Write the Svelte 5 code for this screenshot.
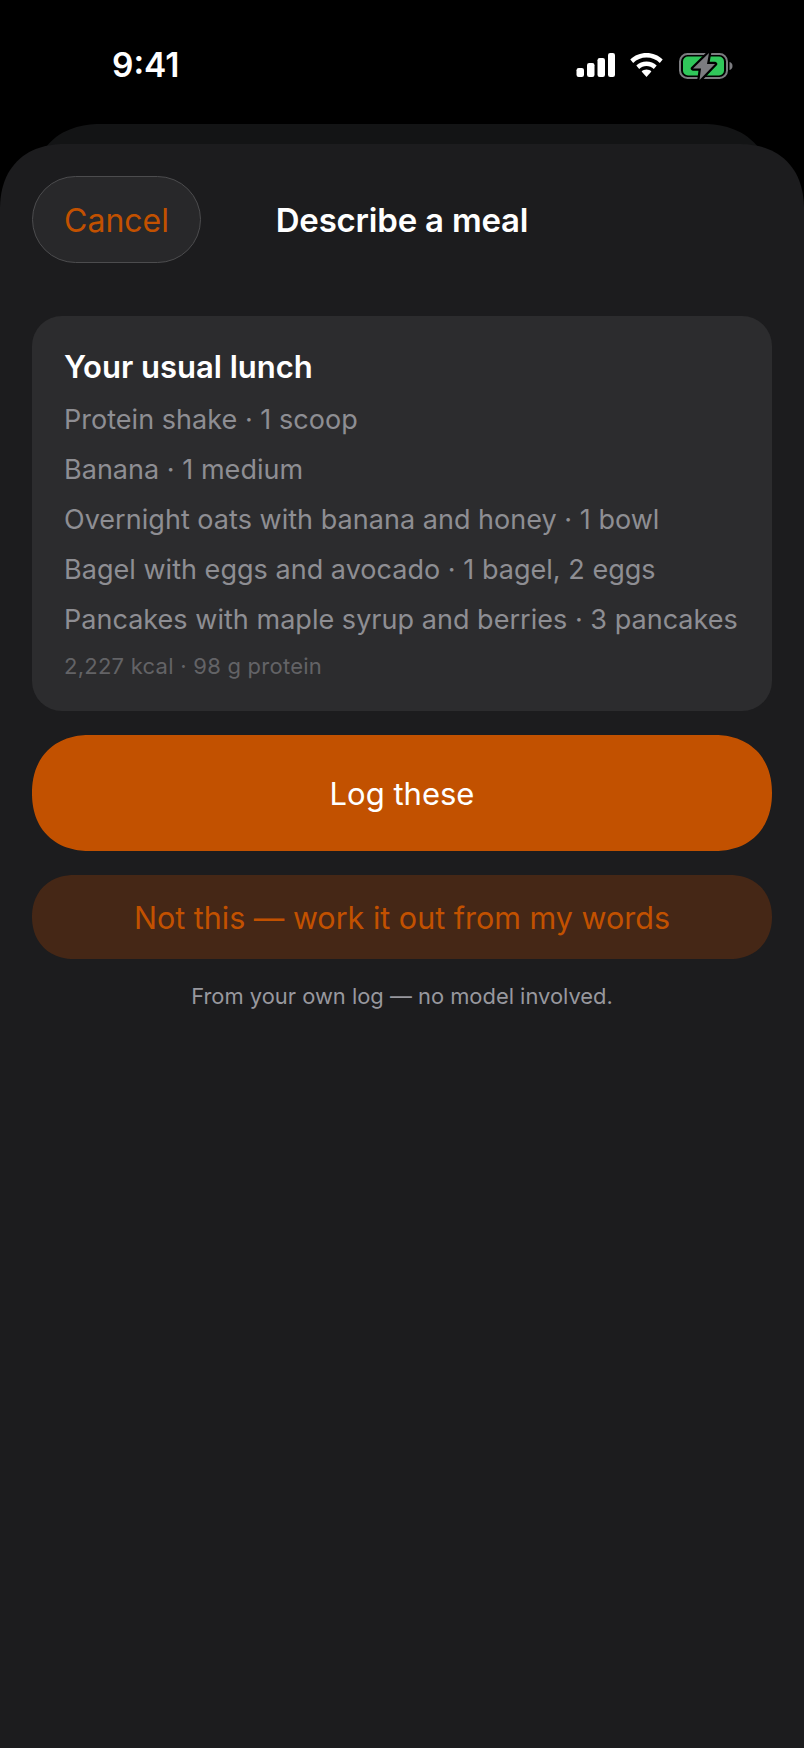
<script lang="ts">
  const items = [
    "Protein shake · 1 scoop",
    "Banana · 1 medium",
    "Overnight oats with banana and honey · 1 bowl",
    "Bagel with eggs and avocado · 1 bagel, 2 eggs",
    "Pancakes with maple syrup and berries · 3 pancakes",
  ];
</script>

<div class="page">
  <div class="status">
    <span class="time">9:41</span>
    <div class="icons">
      <svg class="signal" width="39" height="24" viewBox="0 0 39 24" fill="#fff">
        <rect x="0.5" y="15" width="7.5" height="9" rx="2.2" />
        <rect x="11" y="10" width="7.5" height="14" rx="2.2" />
        <rect x="21.5" y="5" width="7.5" height="19" rx="2.2" />
        <rect x="32" y="0" width="7" height="24" rx="2.2" />
      </svg>
      <svg class="wifi" width="33" height="24" viewBox="0 0 33 24" fill="#fff">
        <path d="M16.5 0C10.2 0 4.6 2.4 0.3 6.400L3.200 10C6.700 6.600 11.400 4.600 16.5 4.600s9.800 2 13.300 5.400l2.900-3.600C28.400 2.400 22.800 0 16.500 0z" />
        <path d="M16.500 8.600c-3.900 0-7.500 1.500-10.200 4l2.900 3.300c1.900-1.800 4.500-2.900 7.300-2.900s5.400 1.100 7.300 2.900l2.900-3.300c-2.700-2.500-6.300-4-10.200-4z" />
        <path d="M16.500 16.600c-1.900 0-3.600 .7-4.900 1.900L16.500 24l4.900-5.500c-1.300-1.200-3-1.900-4.900-1.900z" />
      </svg>
      <svg class="battery" width="55" height="29" viewBox="0 0 55 29">
        <rect x="1" y="2" width="47" height="24" rx="7.500" fill="none" stroke="#7c7c80" stroke-width="2" />
        <rect x="4" y="4.500" width="41" height="19" rx="5" fill="#30c75a" />
        <path d="M50.500 10c2 .5 3 2 3 4s-1 3.500-3 4z" fill="#7c7c80" />
        <path class="bolt" d="M30 1L14 16.500h8L20.500 28 36 12h-8z" />
      </svg>
    </div>
  </div>

  <div class="behind"></div>

  <div class="sheet">
    <header class="top">
      <button type="button" class="cancel">Cancel</button>
      <h1>Describe a meal</h1>
    </header>

    <section class="card">
      <h2>Your usual lunch</h2>
      {#each items as item}
        <p class="item">{item}</p>
      {/each}
      <p class="totals">2,227 kcal · 98 g protein</p>
    </section>

    <button type="button" class="primary">Log these</button>
    <button type="button" class="secondary">Not this — work it out from my words</button>
    <p class="note">From your own log — no model involved.</p>
  </div>
</div>

<style>
  :global(body) {
    margin: 0;
    background: #000;
  }

  .page {
    position: relative;
    width: 804px;
    height: 1748px;
    background: #000;
    overflow: hidden;
    font-family: Inter, "Liberation Sans", sans-serif;
    display: flex;
    flex-direction: column;
  }

  .status {
    height: 144px;
    flex: none;
    box-sizing: border-box;
    padding: 45px 70px 0 112px;
    display: flex;
    justify-content: space-between;
    align-items: flex-start;
  }

  .time {
    color: #fff;
    font-size: 33.500px;
    font-weight: 600;
    line-height: 40px;
  }

  .icons {
    display: flex;
    align-items: flex-start;
    margin-top: 7px;
  }

  .signal {
    margin-right: 15px;
    margin-top: 1px;
  }

  .wifi {
    margin-right: 16px;
    margin-top: 1px;
  }

  .bolt {
    fill: #7c7c80;
    stroke: #000;
    stroke-width: 4.500px;
    stroke-linejoin: round;
    paint-order: stroke;
  }

  .behind {
    position: absolute;
    left: 32px;
    right: 32px;
    top: 124px;
    height: 90px;
    background: #131415;
    border-radius: 70px 70px 0 0;
    corner-shape: superellipse(1.2);
  }

  .sheet {
    position: relative;
    flex: 1;
    background: #1c1c1e;
    border-radius: 66px 66px 0 0;
    corner-shape: superellipse(1.2);
    padding: 32px 32px 0;
    display: flex;
    flex-direction: column;
  }

  .top {
    position: relative;
    height: 87px;
    margin-bottom: 53px;
    display: flex;
    align-items: center;
    justify-content: center;
  }

  .cancel {
    position: absolute;
    left: 0;
    top: 0;
    width: 169px;
    height: 87px;
    box-sizing: border-box;
    border: 1.500px solid #4c4c4e;
    border-radius: 44px;
    background: #28282a;
    color: #c25100;
    font: 400 32px/40px Inter, "Liberation Sans", sans-serif;
    padding: 2px 0 0;
  }

  h1 {
    margin: 1px 0 0;
    color: #fff;
    font-size: 33px;
    font-weight: 600;
    line-height: 40px;
    letter-spacing: -0.2px;
  }

  .card {
    background: #2c2c2e;
    border-radius: 30px;
    height: 395px;
    box-sizing: border-box;
    padding: 32px 32px 0;
    margin-bottom: 24px;
  }

  h2 {
    margin: 0 0 9px;
    color: #fff;
    font-size: 31px;
    font-weight: 600;
    line-height: 38px;
  }

  .item {
    margin: 0;
    color: #8e8e93;
    font-size: 27px;
    line-height: 50px;
    letter-spacing: 0.03px;
  }

  .totals {
    margin: 6px 0 0;
    color: #636366;
    font-size: 22px;
    line-height: 30px;
    letter-spacing: 0.25px;
  }

  .primary {
    height: 116px;
    border: 0;
    border-radius: 58px;
    corner-shape: superellipse(1.15);
    background: #c25100;
    color: #fff;
    font: 400 31px Inter, "Liberation Sans", sans-serif;
    margin-bottom: 24px;
    flex: none;
  }

  .secondary {
    height: 84px;
    border: 0;
    border-radius: 42px;
    corner-shape: superellipse(1.1);
    background: #452716;
    color: #c25100;
    font: 400 30.500px Inter, "Liberation Sans", sans-serif;
    margin-bottom: 22px;
    flex: none;
  }

  .note {
    margin: 0;
    text-align: center;
    color: #98989e;
    font-size: 21.900px;
    line-height: 30px;
  }
</style>
